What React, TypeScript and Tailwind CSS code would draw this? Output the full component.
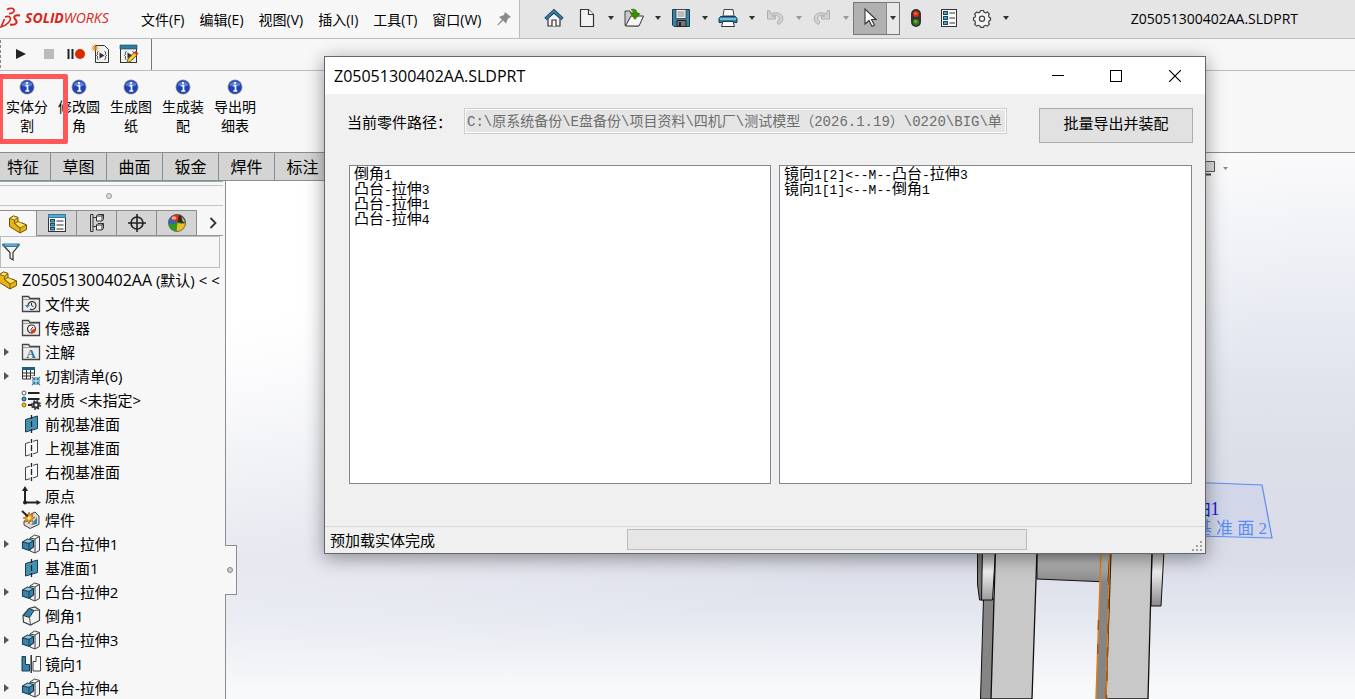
import React, { useState } from "react";

type IconProps = { children: React.ReactNode; size?: string; box?: string };

const Icon = ({ children, size = "size-5", box = "0 0 20 20" }: IconProps) => (
  <svg viewBox={box} className={`${size} shrink-0`} fill="none" aria-hidden="true">
    {children}
  </svg>
);

const HomeIcon = () => (
  <Icon>
    <path d="M4 10v8h12v-8l-6-5z" fill="#f4f4f4" stroke="#333" strokeWidth="1.2" />
    <path d="M1.5 11 10 3l8.5 8" stroke="#17475f" strokeWidth="3.4" />
    <path d="M2 10.6 10 3.2l8 7.4" stroke="#3d86ab" strokeWidth="1.6" />
    <path d="M8 18v-6h4v6" fill="#fff" stroke="#333" strokeWidth="1.2" />
  </Icon>
);

const NewIcon = () => (
  <Icon>
    <path d="M3.5 1.5h8l5 5v12h-13z" fill="#f3f3f3" stroke="#333" strokeWidth="1.2" />
    <path d="M11.5 1.5v5h5" fill="#fff" stroke="#333" strokeWidth="1.2" />
  </Icon>
);

const OpenIcon = () => (
  <Icon>
    <path d="M1 17.5V3h5l1 2h7v13z" fill="#c9c9c9" stroke="#444" />
    <path d="M1.5 18 7 8h12.5L15 18z" fill="#f6f6f6" stroke="#333" />
    <path d="M7 1.5c4-1 6 .5 6 4h3l-5 6-4.5-6h3c0-2-1-3-2.5-4z" fill="#3a9400" stroke="#246300" strokeWidth=".6" />
  </Icon>
);

const SaveIcon = () => (
  <Icon>
    <path d="M1.5 1.5h17v17H3l-1.5-1.5z" fill="#3a82a6" stroke="#143d52" />
    <path d="M5 1.5h10v9H5z" fill="#f5f5f5" stroke="#333" strokeWidth=".8" />
    <path d="M6.5 4h7M6.5 6h7M6.5 8h7" stroke="#777" strokeWidth=".9" />
    <path d="M6 12.5h9v6H6z" fill="#777" stroke="#222" />
    <path d="M8 14h2v4H8z" fill="#222" />
  </Icon>
);

const PrintIcon = () => (
  <Icon>
    <path d="M5 8 6 1.5h9L16 8z" fill="#f8f8f8" stroke="#444" />
    <path d="M2.5 8.5h15l1.5 2v4H1v-4z" fill="#2f7da3" stroke="#143d52" />
    <path d="M2 11h16" stroke="#8fd0ee" strokeWidth="1.5" />
    <path d="M5 13.5h10l1.5 5h-13z" fill="#fff" stroke="#333" />
  </Icon>
);

const TurnIcon = ({ flip }: { flip?: boolean }) => (
  <Icon>
    <g transform={flip ? "matrix(-1 0 0 1 20 0)" : undefined}>
      <path
        d="M2.500 2.500v8.500h8v-2.500l-3.500-.5c2.500-1.500 6-1 7 1.500 .8 2-.5 3.500-2 4.500l1.500 2.500c3.500-1.800 5-4.500 4-7.500-1.500-4.500-8-5.500-12-2.500l-.5-3.500z"
        fill="#d3d3d3"
        stroke="#aeaeae"
      />
    </g>
  </Icon>
);

const ArrowIcon = () => (
  <Icon>
    <path d="M5 1v15l4-3.5 3 6 2.5-1.5-3-5.500H16z" fill="#fff" stroke="#333" strokeWidth="1.1" />
  </Icon>
);

const TrafficIcon = () => (
  <Icon>
    <rect x="5" y="1" width="10" height="18" rx="5" fill="#333" />
    <circle cx="10" cy="6" r="3" fill="#e02b10" />
    <circle cx="9.5" cy="5.5" r="1" fill="#ff9d80" />
    <circle cx="10" cy="14" r="3" fill="#2c8a12" />
    <circle cx="9.5" cy="13.5" r="1" fill="#90e070" />
  </Icon>
);

const OptionsIcon = () => (
  <Icon>
    <rect x="2.5" y="1.5" width="15" height="17" fill="#fafafa" stroke="#333" />
    {[4, 9, 14].map((y) => (
      <g key={y}>
        <rect x="4.5" y={y - 0.5} width="4" height="3" fill="#4ba3cc" stroke="#17475f" />
        <path d={`M10.5 ${y + 1}h5.5`} stroke="#333" />
      </g>
    ))}
  </Icon>
);

const GearIcon = () => (
  <Icon>
    <path
      d="M8.5 2.5h3l.6 1.800 1.500.6 1.800-.9 2 2-.9 1.800.6 1.500 1.400.6v2.200l-1.400.8-.6 1.500.9 1.700-2 2-1.800-.8-1.500.6-.6 1.400h-3l-.6-1.400-1.500-.6-1.800.8-2-2 .9-1.700-.6-1.500-1.400-.8V9.900l1.400-.6.6-1.500L2.600 6l2-2 1.800.9 1.500-.6z"
      fill="#f3f3f3"
      stroke="#444"
      strokeWidth="1.2"
    />
    <circle cx="10" cy="10.7" r="2.6" stroke="#444" strokeWidth="1.2" />
  </Icon>
);

const Caret = ({ dim }: { dim?: boolean }) => (
  <span className="flex w-[15px] justify-center">
    <svg viewBox="0 0 6 4" className="h-1 w-1.5" aria-hidden="true">
      <path d="M0 0h6L3 4z" fill={dim ? "#999" : "#333"} />
    </svg>
  </span>
);

const InfoIcon = () => (
  <Icon size="size-4" box="0 0 16 16">
    <circle cx="8" cy="8" r="7.5" fill="#9a9a9a" />
    <circle cx="8" cy="8" r="6.7" fill="#1f43b5" />
    <path d="M2.5 6a6 6 0 0 1 11 0c-3 2-8 2-11 0z" fill="#5b7ddb" />
    <path d="M8 3v2M6.5 6.700H8.500V12M6.300 12h4" stroke="#fff" strokeWidth="1.7" />
  </Icon>
);

const PartIcon = () => (
  <Icon>
    <path d="M1.500 6.500 1.800 12 12 18.500V12L8 10V3.500L5 3z" fill="#e5ae12" />
    <path d="M1.500 7V4.500L5.500 2l4.500 1.500v5l3 1.500 1.500-1L18.500 11v4.500L12 19 1.500 12.500z" fill="#e8b517" stroke="#6e5208" />
    <path d="m1.500 4.500 4-2.500 4.500 1.500-3.500 2.500z" fill="#ffe57d" stroke="#6e5208" strokeWidth=".8" />
    <path d="m6.500 9.500 3.500-2 8.500 3.500-6.500 3z" fill="#ffdf5a" stroke="#6e5208" strokeWidth=".8" />
    <path d="M6.500 6v3.500L12 14v5" stroke="#6e5208" strokeWidth=".8" />
  </Icon>
);

const PropsIcon = () => (
  <Icon>
    <rect x="1.5" y="1.5" width="17" height="17" fill="#fafafa" stroke="#333" />
    <path d="M1 1h18v4H1z" fill="#2f7da3" />
    <path d="M2 3h16" stroke="#8fd0ee" />
    {[7, 11, 15].map((y) => (
      <g key={y}>
        <rect x="3.5" y={y - 0.5} width="4" height="2.5" fill="#4ba3cc" stroke="#17475f" />
        <path d={`M9.5 ${y + 1}h7`} stroke="#333" />
      </g>
    ))}
  </Icon>
);

const ConfigIcon = () => (
  <Icon>
    <path d="M3.5 1.5v17H6v-17zM6 4.500h4M6 13.500h4" stroke="#333" />
    <path
      d="m9.5 3 1.500-1.500h5.500v5L15 8H9.500zM9.500 12l1.500-1.500h5.500v5L15 17H9.500zM9.500 3H15v5M15 3l1.500-1.500M9.500 12H15v5M15 12l1.500-1.500"
      fill="#f3f3f3"
      stroke="#333"
    />
  </Icon>
);

const TargetIcon = () => (
  <Icon>
    <circle cx="10" cy="10" r="6" stroke="#222" strokeWidth="1.6" />
    <path d="M10 1v18M1 10h18" stroke="#222" strokeWidth="1.6" />
  </Icon>
);

const BallIcon = () => (
  <Icon>
    <circle cx="10" cy="10" r="8.5" fill="#2f9a1c" />
    <path d="M1.500 10C1 5 5 1.500 10 1.500L9.500 10.500C6 11.500 3 11 1.500 10z" fill="#2a68c8" />
    <path d="M3.500 5C6 1.500 10 1 13 2L10.500 9C8 9.500 5 8 3.500 5z" fill="#df2d1d" />
    <path d="M12 1.800c5 1 7 5 6.300 9L10.500 9z" fill="#2b2b2b" />
    <path d="M14.500 3.500c2 1.500 3.500 3.500 3.500 6l-2.500-1z" fill="#c9a48b" />
    <path d="M10.500 10c3 1 5 1 8 0 .3 5-4 9-8.900 8.500z" fill="#f0bf1c" />
    <ellipse cx="7" cy="5" rx="2.5" ry="1.7" fill="#ffc4b5" opacity=".8" />
    <circle cx="10" cy="10" r="8.5" stroke="#555" strokeWidth=".8" />
  </Icon>
);

const FolderIcon = ({ kind }: { kind: "history" | "sensor" | "note" }) => (
  <Icon>
    <path d="M1.5 17.500v-15h6l1.500 2h9.500v13z" fill="#ececec" stroke="#444" strokeWidth="1.3" />
    <path d="M2 5.500h16" stroke="#888" strokeWidth=".8" />
    {kind === "history" && (
      <>
        <path d="M7 11.500a4 4 0 1 1 2 3.500" stroke="#333" strokeWidth="1.2" />
        <path d="M4 11h5l-2.500 3z" fill="#3a82a6" />
        <path d="M10.500 9v2.500l2 1" stroke="#333" />
      </>
    )}
    {kind === "sensor" && (
      <>
        <circle cx="10.5" cy="11" r="4" fill="#fff" stroke="#333" strokeWidth="1.2" />
        <path d="M14.500 11a4 4 0 0 1-4 4l0-2.500z" fill="#e23b1b" stroke="#e23b1b" />
        <path d="m9 12.500 3-3.500" stroke="#333" />
      </>
    )}
    {kind === "note" && (
      <text x="10" y="16" textAnchor="middle" fontSize="13" fontWeight="bold" fontFamily="Liberation Serif" fill="#2b6f93">
        A
      </text>
    )}
  </Icon>
);

const CutListIcon = () => (
  <Icon>
    <path d="M1.500 2h12v11h-12z" fill="#fafafa" stroke="#333" />
    <path d="M1 1h13v3H1z" fill="#1f5f80" />
    <path d="M1.500 7h12M1.500 10h12M5.500 4v9M9.500 4v9" stroke="#333" />
    <path d="M10 10h10v10H10z" fill="#f7f7f7" />
    <path d="m11 11 3 3m0-3v3h-3M19 11l-3 3m0-3v3h3M11 19l3-3m0 3v-3h-3M19 19l-3-3m0 3v-3h3" stroke="#2f7da3" strokeWidth="1.1" />
  </Icon>
);

const MaterialIcon = () => (
  <Icon>
    <path d="M7 3h11.500M7 9h11.500M7 15h4" stroke="#222" strokeWidth="1.8" />
    <circle cx="3" cy="3" r="2" fill="#fff" stroke="#555" />
    <circle cx="3" cy="9" r="2" fill="#4ba3cc" stroke="#17475f" />
    <circle cx="3" cy="15" r="2" fill="#f2c31a" stroke="#8a6a00" />
    <circle cx="15" cy="15" r="2.6" stroke="#333" strokeWidth="2.2" />
    <circle cx="15" cy="15" r="4.2" stroke="#333" strokeWidth="1.6" strokeDasharray="1.7 1.6" />
  </Icon>
);

const PlaneIcon = ({ solid }: { solid?: boolean }) => (
  <Icon>
    <path d="M4.500 5.500 16.500 2v12.500L4.500 18z" fill={solid ? "#4391b5" : "#fafafa"} stroke={solid ? "#143d52" : "#444"} />
    {!solid && <path d="M10.500 1v18" stroke="#f7f7f7" strokeWidth="3" />}
    <path d="M10.500 1v4M10.500 7v6M10.500 15v4" stroke="#222" strokeWidth="1.3" />
  </Icon>
);

const OriginIcon = () => (
  <Icon>
    <path d="M4 3v13.500h13" stroke="#222" strokeWidth="2" />
    <path d="m4 0 3 5H1zM20 16.500l-4.500-2.500v5z" fill="#222" />
    <circle cx="4" cy="16.5" r="2" fill="#222" />
  </Icon>
);

const WeldIcon = () => (
  <Icon>
    <path d="M3 11v4l6 3.500 9-4V6l-4-4-4 2v7z" fill="#d9d9d9" stroke="#444" />
    <path d="m10 15 6-8v7z" fill="#3a82a6" />
    <path d="m8 2 1.200 3 3-1.500L11 6.500l3 1-3 1.300 1 3-3-1.300L8 14l-1.200-3.200-3 1.200L5 9 2 8l3-1.200-1-3 3 1.200z" fill="#f2a01a" stroke="#a64e00" strokeWidth=".6" />
    <circle cx="8" cy="8" r="1.7" fill="#fff3b0" />
    <path d="m1 1 6 5.500" stroke="#222" strokeWidth="1.8" />
  </Icon>
);

const BossIcon = () => (
  <Icon>
    <path d="m9 4 4.500-3L18.500 2.500v14L14 19l-5-2z" fill="#f1f1f1" stroke="#444" />
    <path d="M14 5v14M14 5l4.500-2.500M14 5 9 4" stroke="#444" />
    <path d="m1.500 8 5-3 6 1.500V13L8 16.500 1.500 14z" fill="#3a82a6" stroke="#143d52" strokeWidth="1.1" />
    <path d="m2.500 8 4-2.500L11.500 6.800 8 9z" fill="#8cc4de" />
    <path d="M8 16V9.500L12.500 6.500M8 9.500 2 8" stroke="#143d52" />
  </Icon>
);

const ChamferIcon = () => (
  <Icon>
    <path d="M2 9.500 8 2.500l6-1.500 4.500 3v10.500L9.500 19 2.500 16z" fill="#f1f1f1" stroke="#444" strokeWidth="1.2" />
    <path d="M2.500 9.500 8 2.500l5 2-4.500 7z" fill="#3a82a6" stroke="#143d52" />
    <path d="M8.500 11.500 9.500 19M13 4.500 18.500 4" stroke="#555" />
  </Icon>
);

const MirrorIcon = () => (
  <Icon>
    <path d="M1 2.500h3.500v8h4V17H1z" fill="#3a82a6" stroke="#143d52" />
    <path d="M19.500 2.500H15v5h-3V17h7.500z" fill="#fafafa" stroke="#444" />
    <path d="M10.200 1v18" stroke="#222" strokeWidth="1.4" />
  </Icon>
);

const MacroIcon = ({ edit }: { edit?: boolean }) => (
  <Icon>
    {edit ? (
      <>
        <rect x="1.5" y="1.5" width="16" height="17" fill="#f1f1f1" stroke="#333" />
        <path d="M1 1h17v4H1z" fill="#2f7da3" stroke="#143d52" strokeWidth=".6" />
      </>
    ) : (
      <path d="M4.500 1.500h9l4 4v13h-13z" fill="#f1f1f1" stroke="#333" />
    )}
    <path d="M7.500 7.500c-1.500 0-1 2-1 3l-1 1 1 1c0 1-.5 3 1 3M13.500 7.500c1.500 0 1 2 1 3l1 1-1 1c0 1 .5 3-1 3" stroke="#333" />
    <path d="m8.500 8.500 5 3-5 3z" fill="#333" />
    {edit ? (
      <>
        <path d="m8 18.500 1-3.500 6-6.500 3 2.500-6.500 6.500z" fill="#f4cb35" stroke="#5e4600" strokeWidth=".8" />
        <path d="m15 8.500 1.500-1.500 3 2.500L18 11z" fill="#d0301c" />
      </>
    ) : (
      <path d="M4 .5v7M.5 4h7M1.500 1.500l5 5M6.500 1.500l-5 5" stroke="#e0820f" />
    )}
  </Icon>
);

const menus = ["文件(F)", "编辑(E)", "视图(V)", "插入(I)", "工具(T)", "窗口(W)"];
const macros = ["实体分割", "修改圆角", "生成图纸", "生成装配", "导出明细表"];
const tabs = ["特征", "草图", "曲面", "钣金", "焊件", "标注"];

const quickActions = [
  { label: "新建", icon: <NewIcon /> },
  { label: "打开", icon: <OpenIcon /> },
  { label: "保存", icon: <SaveIcon /> },
  { label: "打印", icon: <PrintIcon /> },
  { label: "撤消", icon: <TurnIcon />, dim: true },
  { label: "重做", icon: <TurnIcon flip />, dim: true },
];

const panelTabs = [
  { label: "设计树", icon: <PartIcon /> },
  { label: "属性", icon: <PropsIcon /> },
  { label: "配置", icon: <ConfigIcon /> },
  { label: "尺寸", icon: <TargetIcon /> },
  { label: "外观", icon: <BallIcon /> },
];

const tree = [
  { text: "文件夹", icon: <FolderIcon kind="history" /> },
  { text: "传感器", icon: <FolderIcon kind="sensor" /> },
  { text: "注解", icon: <FolderIcon kind="note" />, open: true },
  { text: "切割清单(6)", icon: <CutListIcon />, open: true },
  { text: "材质 <未指定>", icon: <MaterialIcon /> },
  { text: "前视基准面", icon: <PlaneIcon solid /> },
  { text: "上视基准面", icon: <PlaneIcon /> },
  { text: "右视基准面", icon: <PlaneIcon /> },
  { text: "原点", icon: <OriginIcon /> },
  { text: "焊件", icon: <WeldIcon /> },
  { text: "凸台-拉伸1", icon: <BossIcon />, open: true },
  { text: "基准面1", icon: <PlaneIcon solid /> },
  { text: "凸台-拉伸2", icon: <BossIcon />, open: true },
  { text: "倒角1", icon: <ChamferIcon /> },
  { text: "凸台-拉伸3", icon: <BossIcon />, open: true },
  { text: "镜向1", icon: <MirrorIcon /> },
  { text: "凸台-拉伸4", icon: <BossIcon />, open: true },
];

const bodies = ["倒角1", "凸台-拉伸3", "凸台-拉伸1", "凸台-拉伸4"];
const mirrors = ["镜向1[2]<--M--凸台-拉伸3", "镜向1[1]<--M--倒角1"];

// Latin runs are set smaller so that two of them fill one Chinese cell
const MonoText = ({ text }: { text: string }) => (
  <>
    {text.split(/([\x20-\x7e]+)/).map((run, i) =>
      i % 2 ? (
        <span key={i} className="text-[13px]">
          {run}
        </span>
      ) : (
        run
      )
    )}
  </>
);

const ListBox = ({ items, label, className }: { items: string[]; label: string; className: string }) => {
  const [selected, setSelected] = useState(-1);

  return (
    <ul
      role="listbox"
      aria-label={label}
      className={`h-[319px] border border-[#828790] bg-white py-0.5 pl-1 font-['Liberation_Mono','Noto_Sans_CJK_SC',monospace] text-[15px] leading-[15px] ${className}`}
    >
      {items.map((item, idx) => (
        <li
          key={idx}
          role="option"
          aria-selected={selected === idx}
          onClick={() => setSelected(idx)}
          className="h-[15px] whitespace-nowrap aria-selected:bg-[#0078d7] aria-selected:text-white"
        >
          <MonoText text={item} />
        </li>
      ))}
    </ul>
  );
};

const TopBar = () => (
  <header className="flex h-[39px] shrink-0 border-b border-[#bdbdbd] bg-[#e5e5e5]">
    <div className="flex w-[520px] shrink-0 items-center border-r border-[#bdbdbd] bg-[#f7f7f7]">
      <div className="flex w-[141px] items-center gap-1 pb-0.5 text-[#d9261c]">
        <svg viewBox="0 0 21 22" className="h-[22px] w-[21px]" fill="none" aria-hidden="true">
          <path d="M7 2.500c3-2 8-1.500 7 1.500-.5 1.500-3 2.500-5 2.700" stroke="currentColor" strokeWidth="1.7" />
          <path d="M5 10C11 8 12 12 8 16c-2 2-4 3.500-7 4L4.500 12" stroke="currentColor" strokeWidth="1.7" />
          <path d="M20 8.500c-5-1-7 1-5 3.500 3 3 2 6.500-5 5.500" stroke="currentColor" strokeWidth="2" />
        </svg>
        <span className="font-['Open_Sans',sans-serif] text-sm leading-5 italic">
          <b>SOLID</b>WORKS
        </span>
      </div>
      <nav className="flex gap-[15px] pt-px text-sm">
        {menus.map((menu) => (
          <button key={menu} className="whitespace-nowrap">
            {menu}
          </button>
        ))}
      </nav>
      <svg viewBox="0 0 14 14" className="ml-4 size-3.5" aria-hidden="true">
        <path d="m8 0 6 5-2 1-1 .5-2 5-3-3-5 5-.7-.7 4.700-5.300L2 5l5-2z" fill="#8a8a8a" />
      </svg>
    </div>
    <div className="flex h-9 items-center pl-[18px]">
      <button aria-label="主页" className="flex w-[33px] justify-center pr-px">
        <HomeIcon />
      </button>
      {quickActions.map((action) => (
        <button key={action.label} aria-label={action.label} className="flex items-center">
          <span className="flex w-8 justify-center">{action.icon}</span>
          <Caret dim={action.dim} />
        </button>
      ))}
      <button aria-label="选择" className="flex h-[33px] w-[47px] items-center border border-[#777] bg-[#b1b1b1]">
        <span className="flex w-8 justify-center">
          <ArrowIcon />
        </span>
        <span className="flex h-full w-[13px] items-center justify-center border-l border-[#888] bg-[#e8e8e8]">
          <Caret />
        </span>
      </button>
      <button aria-label="重建模型" className="flex w-8 justify-center">
        <TrafficIcon />
      </button>
      <button aria-label="文件属性" className="flex w-[34px] justify-center">
        <OptionsIcon />
      </button>
      <button aria-label="选项" className="flex items-center">
        <span className="flex w-8 justify-center">
          <GearIcon />
        </span>
        <Caret />
      </button>
    </div>
    <p className="mr-[57px] ml-auto self-center text-sm">Z05051300402AA.SLDPRT</p>
  </header>
);

const Ribbon = () => (
  <>
    <div className="flex h-8 shrink-0 border-b border-[#bdbdbd]">
      <div className="flex w-[152px] items-center gap-2 border-r border-[#777] pb-0.5">
        <span className="h-7 border-l border-dashed border-[#888]" />
        <button aria-label="运行" className="ml-0.5 flex w-5 justify-center">
          <Icon size="size-3" box="0 0 12 12">
            <path d="M1 1v10l10-5z" fill="#222" />
          </Icon>
        </button>
        <button aria-label="停止" className="ml-1 flex w-3 justify-center">
          <span className="size-2.5 bg-[#bbb]" />
        </button>
        <button aria-label="暂停录制" className="ml-1 flex w-5 items-center">
          <Icon size="h-3 w-5" box="0 0 20 12">
            <path d="M1.500 1v10M5.500 1v10" stroke="#222" strokeWidth="2" />
            <circle cx="13" cy="6" r="5" fill="#dc2a00" />
          </Icon>
        </button>
        <div className="-ml-1 flex gap-2">
          <button aria-label="新建宏">
            <MacroIcon />
          </button>
          <button aria-label="编辑宏">
            <MacroIcon edit />
          </button>
        </div>
      </div>
    </div>
    <div className="flex h-[81px] shrink-0 pt-2">
      {macros.map((name, idx) => (
        <button key={name} className="relative flex h-fit w-[52px] flex-col items-center pl-0.5 text-sm leading-[19px]">
          <InfoIcon />
          <span className="mt-0.5 w-11">{name}</span>
          {idx === 0 && (
            <span className="absolute -top-[5px] -left-0.5 z-10 h-[70px] w-[70px] rounded-xs border-5 border-[#ff5858]" />
          )}
        </button>
      ))}
    </div>
  </>
);

const FeaturePanel = () => (
  <aside className="relative flex w-[226px] shrink-0 flex-col border-r border-[#8c8c8c] bg-[#f7f7f7] *:shrink-0">
    <div className="mr-0.5 h-1 border-t border-[#8eaab4]" />
    <div className="mr-0.5 flex h-[21px] items-center justify-center border-y border-[#c4c4c4] pr-1.5">
      <span className="size-1.5 rounded-full border border-[#999] bg-[#ddd]" />
    </div>
    <div className="mt-1 mr-0.5 flex h-[26px] border-b border-[#999]">
      {panelTabs.map((tab, idx) => (
        <button
          key={tab.label}
          aria-label={tab.label}
          className={
            idx === 0
              ? "flex h-[26px] w-[37px] items-center justify-center border-t border-r border-[#8c8c8c] bg-[#f7f7f7]"
              : "flex h-[26px] w-10 items-center justify-center border-t border-r border-b border-[#8c8c8c] bg-[#d4d4d4]"
          }
        >
          {tab.icon}
        </button>
      ))}
      <button aria-label="更多" className="flex flex-1 items-center justify-center pl-1.5">
        <Icon size="size-3" box="0 0 12 12">
          <path d="m3.500 1 5 5-5 5" stroke="#333" strokeWidth="1.8" />
        </Icon>
      </button>
    </div>
    <label className="mr-[5px] flex h-8 items-center border border-[#bdbdbd]">
      <Icon>
        <path d="M2 3h16l-6 7.500V18l-3-2v-5.500z" fill="#f4f4f4" stroke="#333" strokeWidth="1.2" />
        <path d="M1.500 1.500h17v2l-2 1.500h-13l-2-1.500z" fill="#2f7da3" />
        <path d="M4 3h12" stroke="#8fd0ee" />
      </Icon>
      <input aria-label="筛选" className="min-w-0 flex-1 outline-none" />
    </label>
    <ul className="mr-0.5 text-[15px]">
      <li className="flex h-6 items-center gap-1 overflow-hidden whitespace-nowrap">
        <span className="-ml-0.5">
          <PartIcon />
        </span>
        <span>
          <span className="text-base">Z05051300402AA</span> (默认) &lt; &lt;
        </span>
      </li>
      {tree.map((node) => (
        <li key={node.text} className="flex h-6 items-center whitespace-nowrap">
          <span className="w-[21px] pl-1">
            {node.open && (
              <svg viewBox="0 0 5 8" className="h-2 w-[5px]" aria-hidden="true">
                <path d="M0 0v8l5-4z" fill="#555" />
              </svg>
            )}
          </span>
          {node.icon}
          <span className="ml-1">{node.text}</span>
        </li>
      ))}
    </ul>
    <button
      aria-label="折叠面板"
      className="absolute top-[364px] -right-3 flex h-[50px] w-3 items-center justify-center border border-l-0 border-[#8c8c8c] bg-[#f7f7f7] pr-0.5"
    >
      <span className="size-1.5 rounded-full border border-[#888] bg-[#ccc]" />
    </button>
  </aside>
);

const Model = () => (
  <svg viewBox="0 0 395 229" className="absolute right-0 bottom-0 h-[229px] w-[395px]" fill="none">
    <defs>
      <linearGradient id="cap" x1="0" y1="83" x2="0" y2="135" gradientUnits="userSpaceOnUse">
        <stop stopColor="#aaa" />
        <stop offset=".35" stopColor="#f0f0f0" />
        <stop offset="1" stopColor="#8c8c8c" />
      </linearGradient>
      <linearGradient id="bar" x1="0" y1="75" x2="0" y2="111" gradientUnits="userSpaceOnUse">
        <stop stopColor="#8a8a8a" />
        <stop offset=".5" stopColor="#b5b5b5" />
        <stop offset="1" stopColor="#8a8a8a" />
      </linearGradient>
    </defs>
    <path d="M23.500 129h11l-3 100H20.500z" fill="#858585" stroke="#111" />
    <path d="M17.500 80v34l2 16h4V80z" fill="#777" stroke="#111" />
    <path d="M22.500 80l-1 50h11l3-50z" fill="url(#cap)" stroke="#111" />
    <path d="M77 80h73l-2 32-71-3z" fill="url(#bar)" stroke="#111" />
    <path d="M35.500 80h41.500l-5 149H31z" fill="#c8c8c8" stroke="#111" strokeWidth="1.3" />
    <path d="M140 111h9l-3 118h-10z" fill="#858585" />
    <path d="M192 80h12l-3 56h-10z" fill="url(#cap)" stroke="#111" />
    <path d="M151 80h41l-4 149h-42z" fill="#c8c8c8" stroke="#111" strokeWidth="1.3" />
    <path d="M141 80l-1 31-4 118M150 80l-1 31-3 118" stroke="#e87a10" strokeWidth="1.4" />
    <path d="m138.500 150-1 40M149 105l-2.500 124" stroke="#9a520c" strokeWidth="1.4" strokeDasharray="10 14" />
    <path d="m200 11 102 4 10 53-112-3z" fill="#7ea0f0" fillOpacity=".1" stroke="#5b8cf5" strokeWidth="1.2" />
    <text x="246" y="45" textAnchor="middle" fontSize="18" fontFamily="Liberation Serif, Noto Sans CJK SC, serif" fill="#1414e6">
      轴1
    </text>
    <text x="307" y="64" textAnchor="end" fontSize="17" fontFamily="Liberation Serif, Noto Sans CJK SC, serif" fill="#5b8cf5">
      基 准 面 2
    </text>
  </svg>
);

const ExportDialog = () => (
  <section
    role="dialog"
    aria-labelledby="dialog-title"
    className="absolute top-14 right-[149px] left-[324px] z-20 border border-[#666] bg-[#f0f0f0] shadow-[0_4px_18px_rgba(0,0,0,0.4)]"
  >
    <div className="flex h-[37px] items-center bg-white pl-[9px]">
      <h1 id="dialog-title" className="flex-1 text-base">
        Z05051300402AA.SLDPRT
      </h1>
      <button aria-label="最小化" className="flex w-[58px] justify-center">
        <span className="h-px w-3 bg-black" />
      </button>
      <button aria-label="最大化" className="flex w-[58px] justify-center">
        <span className="size-3 border border-black" />
      </button>
      <button aria-label="关闭" className="flex w-[60px] justify-center">
        <Icon size="size-3" box="0 0 12 12">
          <path d="m0 0 12 12M12 0 0 12" stroke="#000" strokeWidth="1.2" />
        </Icon>
      </button>
    </div>
    <div className="flex pt-3.5 pr-3 pl-[22px]">
      <label htmlFor="part-path" className="w-[117px] shrink-0 pt-0.5 text-[15px] leading-6">
        当前零件路径：
      </label>
      <input
        id="part-path"
        disabled
        defaultValue="C:\原系统备份\E盘备份\项目资料\四机厂\测试模型（2026.1.19）\0220\BIG\单"
        className="h-[26px] min-w-0 flex-1 border border-[#ccc] bg-[#e5e5e5] px-0.5 pb-0.5 font-['Liberation_Mono','Noto_Sans_CJK_SC',monospace] text-sm text-[#6d6d6d] shadow-[inset_0_0_0_1px_#fff]"
      />
      <button className="ml-8 h-[35px] w-[154px] shrink-0 border border-[#adadad] bg-[#e1e1e1] pb-1 text-[15px]">
        批量导出并装配
      </button>
    </div>
    <div className="mt-[22px] flex gap-2 pr-[13px] pl-6">
      <ListBox label="实体" items={bodies} className="w-[422px] shrink-0" />
      <ListBox label="镜向" items={mirrors} className="min-w-0 flex-1" />
    </div>
    <footer className="mt-[42px] flex h-[27px] items-center border-t border-[#d7d7d7] pl-[5px] text-[15px]">
      <span className="w-[297px] shrink-0">预加载实体完成</span>
      <div role="progressbar" aria-label="进度" className="mb-px h-[21px] w-[400px] border border-[#bcbcbc] bg-[#e6e6e6]" />
      <svg viewBox="0 0 10 10" className="mt-3 mr-[3px] ml-auto size-2.5" aria-hidden="true">
        <path d="M8 0h2v2H8zM4 4h2v2H4zM8 4h2v2H8zM0 8h2v2H0zM4 8h2v2H4zM8 8h2v2H8z" fill="#a0a0a0" />
      </svg>
    </footer>
  </section>
);

const App = () => {
  return (
    <div className="relative flex h-screen flex-col overflow-hidden bg-[#f7f7f7] font-['Open_Sans','Noto_Sans_CJK_SC',sans-serif] text-black">
      <TopBar />
      <Ribbon />
      <main className="relative flex min-h-0 flex-1 flex-col border-t border-[#8c8c8c] bg-[radial-gradient(ellipse_at_0%_0%,#fff_25%,transparent_70%),linear-gradient(to_bottom,#fafafb_0%,#e6e9f1_32%,#dcdee8_55%,#dadce8_74%,#e6e9f1_86%,#f8f9fa_98%)]">
        <Model />
        <svg viewBox="0 0 30 16" className="absolute top-2 right-[126px] h-4 w-[30px]" fill="none" aria-hidden="true">
          <path d="M1 .5h14.500v10H1z" fill="#ddd" stroke="#555" />
          <path d="M6 13.500h6" stroke="#444" strokeWidth="2" />
          <path d="M24 6h5l-2.500 3z" fill="#888" />
        </svg>
        <nav className="flex h-7 w-fit shrink-0 border-b border-[#8c8c8c] bg-[#d4d4d4]">
          {tabs.map((tab, idx) => (
            <button
              key={tab}
              className={`h-full border-r border-[#8c8c8c] text-base leading-6 ${idx === 0 ? "w-[51px] pr-1" : "w-14"}`}
            >
              {tab}
            </button>
          ))}
        </nav>
        <div className="flex min-h-0 flex-1">
          <FeaturePanel />
        </div>
      </main>
      <ExportDialog />
    </div>
  );
};

export default App;
